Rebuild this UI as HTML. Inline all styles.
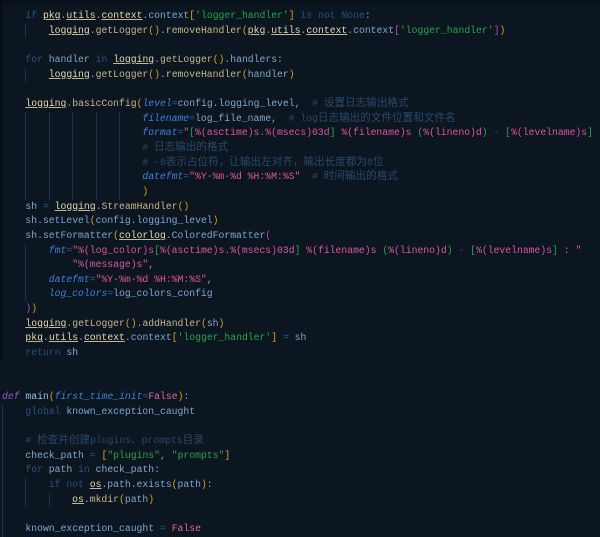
<!DOCTYPE html>
<html><head><meta charset="utf-8"><style>
html,body{margin:0;padding:0;background:#0b1620;width:600px;height:533px;overflow:hidden}
#top{position:absolute;left:0;top:0;width:600px;height:3px;background:#08111a}
#lft{position:absolute;left:0;top:0;width:3px;height:360px;background:#070f16}
#code{position:absolute;left:2px;top:9px;font-family:"Liberation Mono","Noto Sans CJK SC",monospace;font-size:9.75px;color:#82a6cf}
#code div{height:14.66px;line-height:14.66px;white-space:pre;overflow:visible}
.c{font-family:"Noto Sans CJK SC","Liberation Mono",sans-serif;font-size:10.6px;line-height:10px}
i.g{font-style:normal;display:inline-block;width:23.4px;border-left:1px solid #1a3350;box-sizing:border-box;height:14.66px;vertical-align:top}
i.n{font-style:normal;display:inline-block;width:23.4px;height:14.66px;vertical-align:top}
.k{color:#2a5080}
.m{color:#e6d9b2;text-decoration:underline;text-decoration-color:#c9b98a}
.f{color:#c8b68a}
.p{color:#3d82dc;font-style:italic}
.s{color:#e0569a}
.gr{color:#28a34c}
.y{color:#d8a31c}
.pu{color:#b548c8}
.cm{color:#2b486c}
.b{color:#e0679f}
.d{color:#8a5cc4;font-style:italic}
.e{color:#2f5d96}
.w{color:#9cbde0}
</style></head><body><div id="top"></div><div id="lft"></div>
<div id="code">
<div><i class="n"></i><span class="k">if</span> <span class="m">pkg</span>.<span class="m">utils</span>.<span class="m">context</span>.context<span class="y">[</span><span class="gr">'logger_handler'</span><span class="y">]</span> <span class="k">is not</span> <span class="k">None</span>:</div>
<div><i class="n"></i><i class="g"></i><span class="m">logging</span>.<span class="f">getLogger</span><span class="y">()</span>.<span class="f">removeHandler</span><span class="y">(</span><span class="m">pkg</span>.<span class="m">utils</span>.<span class="m">context</span>.context<span class="pu">[</span><span class="gr">'logger_handler'</span><span class="pu">]</span><span class="y">)</span></div>
<div></div>
<div><i class="n"></i><span class="k">for</span> handler <span class="k">in</span> <span class="m">logging</span>.<span class="f">getLogger</span><span class="y">()</span>.handlers:</div>
<div><i class="n"></i><i class="g"></i><span class="m">logging</span>.<span class="f">getLogger</span><span class="y">()</span>.<span class="f">removeHandler</span><span class="y">(</span>handler<span class="y">)</span></div>
<div></div>
<div><i class="n"></i><span class="m">logging</span>.<span class="f">basicConfig</span><span class="y">(</span><span class="p">level</span><span class="e">=</span>config.logging_level,  <span class="cm"># <span class="c">设置日志输出格式</span></span></div>
<div><i class="n"></i><i class="g"></i><i class="g"></i><i class="g"></i><i class="g"></i><i class="g"></i><span class="p">filename</span><span class="e">=</span>log_file_name,  <span class="cm"># log<span class="c">日志输出的文件位置和文件名</span></span></div>
<div><i class="n"></i><i class="g"></i><i class="g"></i><i class="g"></i><i class="g"></i><i class="g"></i><span class="p">format</span><span class="e">=</span><span class="s">"<span class="gr">[</span>%(asctime)s.%(msecs)03d<span class="gr">]</span> %(filename)s <span class="gr">(</span>%(lineno)d<span class="gr">)</span> <span class="cm">-</span> <span class="gr">[</span>%(levelname)s<span class="gr">]</span></span></div>
<div><i class="n"></i><i class="g"></i><i class="g"></i><i class="g"></i><i class="g"></i><i class="g"></i><span class="cm"># <span class="c">日志输出的格式</span></span></div>
<div><i class="n"></i><i class="g"></i><i class="g"></i><i class="g"></i><i class="g"></i><i class="g"></i><span class="cm"># -8<span class="c">表示占位符，让输出左对齐，输出长度都为</span>8<span class="c">位</span></span></div>
<div><i class="n"></i><i class="g"></i><i class="g"></i><i class="g"></i><i class="g"></i><i class="g"></i><span class="p">datefmt</span><span class="e">=</span><span class="s">"%Y-%m-%d %H:%M:%S"</span>  <span class="cm"># <span class="c">时间输出的格式</span></span></div>
<div><i class="n"></i><i class="g"></i><i class="g"></i><i class="g"></i><i class="g"></i><i class="g"></i><span class="y">)</span></div>
<div><i class="n"></i>sh <span class="e">=</span> <span class="m">logging</span>.<span class="f">StreamHandler</span><span class="y">()</span></div>
<div><i class="n"></i>sh.setLevel<span class="y">(</span>config.logging_level<span class="y">)</span></div>
<div><i class="n"></i>sh.setFormatter<span class="y">(</span><span class="m">colorlog</span>.ColoredFormatter<span class="pu">(</span></div>
<div><i class="n"></i><i class="g"></i><span class="p">fmt</span><span class="e">=</span><span class="s">"%(log_color)s<span class="gr">[</span>%(asctime)s.%(msecs)03d<span class="gr">]</span> %(filename)s <span class="gr">(</span>%(lineno)d<span class="gr">)</span> <span class="cm">-</span> <span class="gr">[</span>%(levelname)s<span class="gr">]</span> : "</span></div>
<div><i class="n"></i><i class="g"></i>    <span class="s">"%(message)s"</span>,</div>
<div><i class="n"></i><i class="g"></i><span class="p">datefmt</span><span class="e">=</span><span class="s">"%Y-%m-%d %H:%M:%S"</span>,</div>
<div><i class="n"></i><i class="g"></i><span class="p">log_colors</span><span class="e">=</span>log_colors_config</div>
<div><i class="n"></i><span class="pu">)</span><span class="y">)</span></div>
<div><i class="n"></i><span class="m">logging</span>.<span class="f">getLogger</span><span class="y">()</span>.<span class="f">addHandler</span><span class="y">(</span>sh<span class="y">)</span></div>
<div><i class="n"></i><span class="m">pkg</span>.<span class="m">utils</span>.<span class="m">context</span>.context<span class="y">[</span><span class="gr">'logger_handler'</span><span class="y">]</span> <span class="e">=</span> sh</div>
<div><i class="n"></i><span class="k">return</span> sh</div>
<div></div>
<div></div>
<div><span class="d">def</span> <span class="w">main</span><span class="y">(</span><span class="p">first_time_init</span><span class="e">=</span><span class="b">False</span><span class="y">)</span>:</div>
<div><i class="g"></i><span class="k">global</span> known_exception_caught</div>
<div><i class="g"></i></div>
<div><i class="g"></i><span class="cm"># <span class="c">检查并创建</span>plugins<span class="c">、</span>prompts<span class="c">目录</span></span></div>
<div><i class="g"></i>check_path <span class="e">=</span> <span class="y">[</span><span class="gr">"plugins"</span>, <span class="gr">"prompts"</span><span class="y">]</span></div>
<div><i class="g"></i><span class="k">for</span> path <span class="k">in</span> check_path:</div>
<div><i class="g"></i><i class="g"></i><span class="k">if not</span> <span class="m">os</span>.path.exists<span class="y">(</span>path<span class="y">)</span>:</div>
<div><i class="g"></i><i class="g"></i><i class="g"></i><span class="m">os</span>.<span class="f">mkdir</span><span class="y">(</span>path<span class="y">)</span></div>
<div><i class="g"></i></div>
<div><i class="g"></i>known_exception_caught <span class="e">=</span> <span class="b">False</span></div>
</div>
</body></html>
